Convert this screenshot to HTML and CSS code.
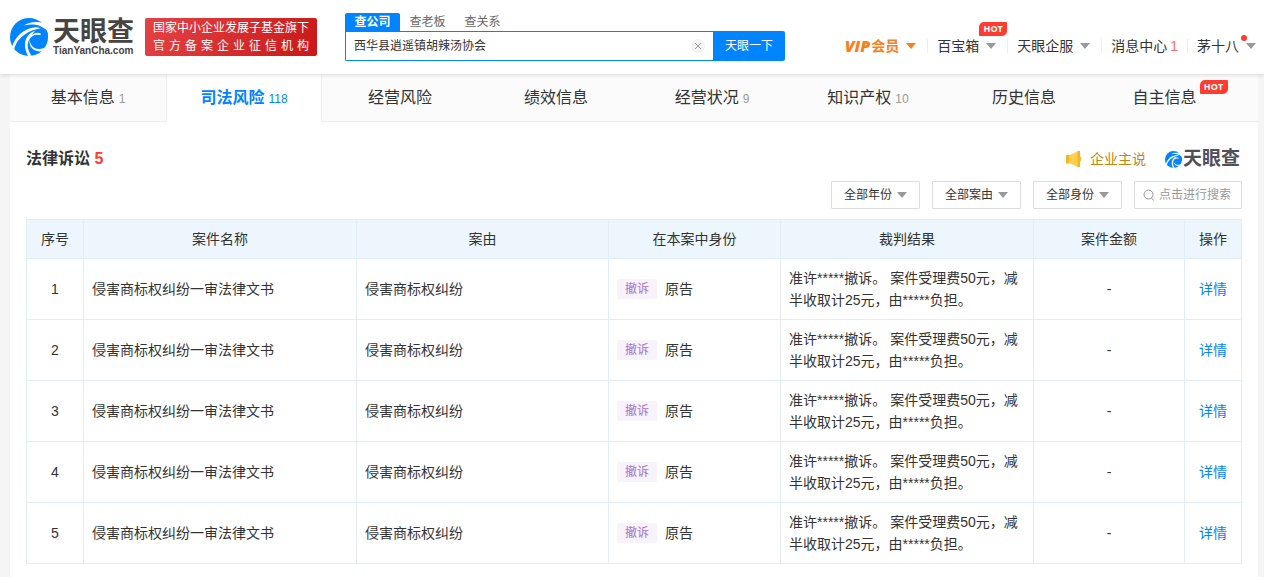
FILE: index.html
```html
<!DOCTYPE html>
<html lang="zh-CN">
<head>
<meta charset="utf-8">
<title>天眼查</title>
<link rel="stylesheet" href="styles.css">
</head>
<body>
<svg class="defs" width="0" height="0" aria-hidden="true">
  <symbol id="swirl" viewBox="0 0 38 38">
    <circle cx="19" cy="19" r="19" fill="#0084ff"/>
    <path d="M34 5.500C27 3 19 4 14 7.500 20 6 26 6 31 8.500L38 13V5z" fill="#fff"/>
    <path d="M2 29C5 19 13 11 24 9.500c4-.5 7 .5 9 2.500-4-1.500-8-1-12 1C12 17 6 23 4 32z" fill="#fff"/>
    <path d="M32 13c-6-2-13 1-16 8-2 5-1 11 2 17l3.500-.3C17 31 17 26 19 22c2-4 6-6 10-5 2 .5 3-2 3-4z" fill="#fff"/>
    <path d="M20 20c-1 6 3 11 9 11 3 0 6-1 8.500-4l-1.500 4c-3 2-6 3-9 2-5-1-9-6-7-13z" fill="#fff"/>
    <path d="M22 17c3-3 8-3 10 0 1 3-1 7-4 9 6 0 10-4 10-8 0-5-3-8-6-8-4 0-8 3-10 7z" fill="#0084ff"/>
  </symbol>
</svg>

<header class="header">
  <a class="brand" href="#">
    <svg class="brand-mark" aria-hidden="true"><use href="#swirl"/></svg>
    <span class="brand-words"><b class="brand-name">天眼查</b><b class="brand-site">TianYanCha.com</b></span>
  </a>
  <p class="record"><span>国家中小企业发展子基金旗下</span><span class="record-line">官方备案企业征信机构</span></p>
  <form class="search">
    <div class="search-tabs">
      <button type="button" class="search-tab on">查公司</button>
      <button type="button" class="search-tab">查老板</button>
      <button type="button" class="search-tab">查关系</button>
    </div>
    <div class="search-row">
      <div class="search-box">
        <input class="search-input" type="text" aria-label="搜索公司" value="西华县逍遥镇胡辣汤协会">
        <button type="button" class="clear" aria-label="清除"><svg width="14" height="14" viewBox="0 0 14 14"><circle cx="7" cy="7" r="7" fill="#f3f3f3"/><path d="M4 4l6 6M10 4l-6 6" stroke="#999"/></svg></button>
      </div>
      <button type="submit" class="search-go">天眼一下</button>
    </div>
  </form>
  <nav class="nav">
    <a class="nav-item vip" href="#"><i>VIP</i>会员<span class="caret"></span></a>
    <a class="nav-item" href="#">百宝箱<span class="caret"></span><em class="hot">HOT</em></a>
    <a class="nav-item" href="#">天眼企服<span class="caret"></span></a>
    <a class="nav-item message" href="#">消息中心<span class="count">1</span></a>
    <a class="nav-item user" href="#">茅十八<span class="caret"></span><span class="dot"></span></a>
  </nav>
</header>

<main class="page">
  <nav class="tabs">
    <a class="tab" href="#"><span>基本信息<small>1</small></span></a>
    <a class="tab active" href="#"><span>司法风险<small>118</small></span></a>
    <a class="tab" href="#"><span>经营风险</span></a>
    <a class="tab" href="#"><span>绩效信息</span></a>
    <a class="tab" href="#"><span>经营状况<small>9</small></span></a>
    <a class="tab" href="#"><span>知识产权<small>10</small></span></a>
    <a class="tab" href="#"><span>历史信息</span></a>
    <a class="tab" href="#"><span>自主信息</span><em class="hot">HOT</em></a>
  </nav>

  <section class="panel">
    <div class="panel-head">
      <h2 class="title">法律诉讼 <span class="title-count">5</span></h2>
      <a class="speak" href="#">
        <svg width="16" height="16" viewBox="0 0 16 16" aria-hidden="true"><path d="M0 4h3v8.500H0z" fill="#ffb31a"/><path d="M3 4h1l8-4v16l-8-3.500H3z" fill="#ffcf52"/><path d="M11.500 0H14v16h-2.500z" fill="#ffb31a"/><path d="M14 5q3 3 0 6z" fill="#ffc233"/></svg>
        企业主说
      </a>
      <span class="mini-brand"><svg width="17" height="17" aria-hidden="true"><use href="#swirl"/></svg><b>天眼查</b></span>
    </div>
    <div class="filters">
      <span class="filter"><select aria-label="年份"><option>全部年份</option></select><span class="caret"></span></span>
      <span class="filter"><select aria-label="案由"><option>全部案由</option></select><span class="caret"></span></span>
      <span class="filter"><select aria-label="身份"><option>全部身份</option></select><span class="caret"></span></span>
      <label class="find">
        <svg width="12" height="12" viewBox="0 0 12 12" aria-hidden="true"><circle cx="5.500" cy="5.500" r="4.500" fill="none" stroke="#999"/><path d="M8.500 9l2 2.500" stroke="#999"/></svg>
        <input type="text" placeholder="点击进行搜索" aria-label="点击进行搜索">
      </label>
    </div>
    <table class="cases">
      <colgroup><col class="c-no"><col class="c-name"><col class="c-cause"><col class="c-role"><col class="c-result"><col class="c-sum"><col class="c-no"></colgroup>
      <thead><tr><th>序号</th><th>案件名称</th><th>案由</th><th>在本案中身份</th><th>裁判结果</th><th>案件金额</th><th>操作</th></tr></thead>
      <tbody>
        <tr><td class="mid">1</td><td>侵害商标权纠纷一审法律文书</td><td>侵害商标权纠纷</td><td><span class="role"><span class="tag">撤诉</span>原告</span></td><td>准许*****撤诉。 案件受理费50元，减半收取计25元，由*****负担。</td><td class="mid">-</td><td class="mid"><a href="#">详情</a></td></tr>
        <tr><td class="mid">2</td><td>侵害商标权纠纷一审法律文书</td><td>侵害商标权纠纷</td><td><span class="role"><span class="tag">撤诉</span>原告</span></td><td>准许*****撤诉。 案件受理费50元，减半收取计25元，由*****负担。</td><td class="mid">-</td><td class="mid"><a href="#">详情</a></td></tr>
        <tr><td class="mid">3</td><td>侵害商标权纠纷一审法律文书</td><td>侵害商标权纠纷</td><td><span class="role"><span class="tag">撤诉</span>原告</span></td><td>准许*****撤诉。 案件受理费50元，减半收取计25元，由*****负担。</td><td class="mid">-</td><td class="mid"><a href="#">详情</a></td></tr>
        <tr><td class="mid">4</td><td>侵害商标权纠纷一审法律文书</td><td>侵害商标权纠纷</td><td><span class="role"><span class="tag">撤诉</span>原告</span></td><td>准许*****撤诉。 案件受理费50元，减半收取计25元，由*****负担。</td><td class="mid">-</td><td class="mid"><a href="#">详情</a></td></tr>
        <tr><td class="mid">5</td><td>侵害商标权纠纷一审法律文书</td><td>侵害商标权纠纷</td><td><span class="role"><span class="tag">撤诉</span>原告</span></td><td>准许*****撤诉。 案件受理费50元，减半收取计25元，由*****负担。</td><td class="mid">-</td><td class="mid"><a href="#">详情</a></td></tr>
      </tbody>
    </table>
  </section>
</main>
</body>
</html>
```
FILE: styles.css
```css
* { box-sizing: border-box; }
body {
  margin: 0;
  background: #f5f5f5;
  color: #333;
  font: 14px/22px "Liberation Sans", "Noto Sans CJK SC", sans-serif;
}
a { color: inherit; text-decoration: none; }
button, input, select { margin: 0; padding: 0; border: 0; background: none; color: inherit; font: inherit; outline: 0; }
svg { display: block; flex: none; }
.defs { position: absolute; }

.header {
  position: relative;
  display: flex;
  align-items: center;
  height: 74px;
  padding: 0 8px 0 10px;
  background: #fff;
  box-shadow: 0 1px 4px rgba(0, 0, 0, .14);
}
.brand { display: flex; gap: 5px; width: 135px; color: #474443; }
.brand-mark { width: 38px; height: 38px; }
.brand-words { display: flex; flex-direction: column; }
.brand-name { font-size: 27px; line-height: 28px; font-weight: 700; white-space: nowrap; }
.brand-site { font-size: 10px; line-height: 10px; }
.record {
  display: flex;
  flex-direction: column;
  width: 172px;
  height: 38px;
  margin: 0;
  padding: 1px 8px;
  border-radius: 2px;
  background: linear-gradient(120deg, #e54246, #c91818);
  color: #fff;
  font-size: 12px;
  line-height: 18px;
  white-space: nowrap;
}
.record-line { text-align-last: justify; text-justify: inter-character; }

.search { width: 440px; margin: 0 0 0 28px; font-size: 12px; }
.search-tabs { display: flex; height: 18px; }
.search-tab { width: 55px; line-height: 18px; color: #666; cursor: pointer; }
.search-tab.on { border-radius: 2px 2px 0 0; background: #0084ff; color: #fff; font-weight: bold; }
.search-row { display: flex; height: 30px; }
.search-box {
  flex: 1;
  display: flex;
  align-items: center;
  padding: 0 8px;
  border: 1px solid #0084ff;
  border-right: 0;
  border-radius: 0 0 0 2px;
}
.search-input { flex: 1; min-width: 0; line-height: 26px; }
.search-go { width: 72px; border-radius: 0 2px 2px 0; background: #0084ff; color: #fff; }

.nav { display: flex; margin: 18px 0 0 auto; }
.nav-item { position: relative; display: flex; align-items: center; padding: 0 11px 0 10px; white-space: nowrap; }
.nav-item + .nav-item::before { content: ""; position: absolute; left: 0; top: 4px; width: 1px; height: 14px; background: #eee; }
.nav-item:last-child { padding-right: 0; }
.caret { flex: none; margin-left: 7px; border: 5px solid transparent; border-top: 6px solid #999; border-bottom: 0; }
.vip { color: #ff7d18; font-weight: bold; }
.vip i { margin-right: 1px; font: italic 800 16px/22px "Open Sans", sans-serif; }
.vip .caret { border-top-color: #ff7d18; }
.message { padding-right: 9px; }
.count { margin-left: 3px; color: #ff6b6b; }
.hot {
  width: 28px;
  border-radius: 5px 1px 5px 1px;
  background: #ff3b30;
  color: #fff;
  font: bold 9px/14px "Open Sans", sans-serif;
  text-align: center;
}
.nav-item .hot { position: absolute; right: 0; top: -13px; }
.dot { position: absolute; right: 9px; top: 0; width: 6px; height: 6px; border-radius: 50%; background: #ff3b30; }

.page { margin: 0 6px 0 10px; background: #fff; }
.tabs { display: grid; grid-template-columns: repeat(8, 1fr); height: 48px; background: #fbfbfb; border-bottom: 1px solid #eee; }
.tab { display: flex; justify-content: center; padding-top: 13px; font-size: 16px; white-space: nowrap; }
.tab small { margin-left: 4px; color: #999; font-size: 12px; font-weight: normal; }
.tab.active { margin-bottom: -1px; border: solid #eee; border-width: 0 1px; background: #fff; color: #0084ff; font-weight: bold; }
.tab.active small { color: #0084ff; }
.tab .hot { align-self: flex-start; margin: -7px 0 0 3px; }

.panel { padding: 25px 16px 14px; }
.panel-head { display: flex; align-items: center; height: 24px; }
.title { flex: 1; margin: 0; font-size: 16px; }
.title-count { color: #ff3b30; }
.speak { display: flex; align-items: center; gap: 8px; margin-right: 19px; color: #c58412; }
.mini-brand { display: flex; align-items: center; gap: 1px; margin-right: 2px; color: #4f5058; font-size: 19px; line-height: 24px; white-space: nowrap; }

.filters { display: flex; justify-content: flex-end; gap: 12px; padding: 10px 0; font-size: 12px; }
.filter, .find { position: relative; display: flex; align-items: center; height: 28px; border: 1px solid #ddd; border-radius: 1px; }
.filter { width: 89px; }
.filter select { flex: 1; height: 26px; padding-left: 12px; appearance: none; }
.filter .caret { position: absolute; right: 12px; top: 10px; pointer-events: none; }
.find { width: 108px; gap: 4px; padding-left: 8px; }
.find input { flex: 1; min-width: 0; }
.find input::placeholder { color: #999; opacity: 1; }

.cases { width: 100%; table-layout: fixed; border-collapse: collapse; }
.c-no { width: 57px; }
.c-name { width: 273px; }
.c-cause { width: 252px; }
.c-role { width: 172px; }
.c-result { width: 253px; }
.c-sum { width: 151px; }
.cases th, .cases td { padding: 8px; border: 1px solid #e1edf7; font-weight: normal; text-align: left; }
.cases th { background: #eef6fd; text-align: center; }
.cases .mid { text-align: center; }
.cases .mid a { color: #0084ff; }
.role { display: flex; align-items: center; gap: 8px; }
.tag { padding: 0 8px; border-radius: 2px; background: #f8f2fb; color: #a173c9; font-size: 12px; line-height: 20px; }
```
